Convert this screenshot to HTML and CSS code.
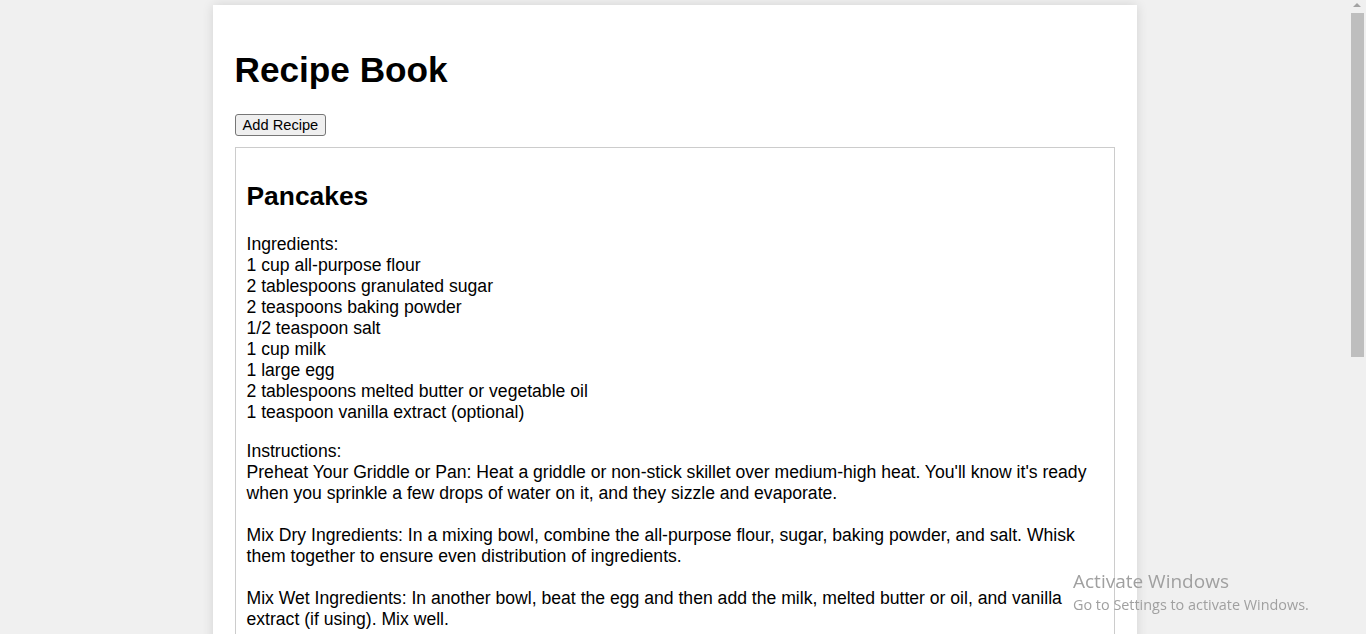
FILE: index.html
```html
<!DOCTYPE html>
<html lang="en">
<head>
<meta charset="utf-8">
<title>Recipe Book</title>
<link rel="stylesheet" href="styles.css">
</head>
<body>
<div class="page">
  <h1 class="title">Recipe Book</h1>
  <button class="add-btn" type="button">Add Recipe</button>
  <div class="recipe-list">
    <div class="recipe">
      <h2 class="recipe-name">Pancakes</h2>
      <p class="recipe-section">Ingredients:<br>1 cup all-purpose flour<br>2 tablespoons granulated sugar<br>2 teaspoons baking powder<br>1/2 teaspoon salt<br>1 cup milk<br>1 large egg<br>2 tablespoons melted butter or vegetable oil<br>1 teaspoon vanilla extract (optional)</p>
      <p class="recipe-section">Instructions:<br>Preheat Your Griddle or Pan: Heat a griddle or non-stick skillet over medium-high heat. You'll know it's ready when you sprinkle a few drops of water on it, and they sizzle and evaporate.<br><br>Mix Dry Ingredients: In a mixing bowl, combine the all-purpose flour, sugar, baking powder, and salt. Whisk them together to ensure even distribution of ingredients.<br><br>Mix Wet Ingredients: In another bowl, beat the egg and then add the milk, melted butter or oil, and vanilla extract (if using). Mix well.<br><br>Combine Wet and Dry Ingredients: Pour the wet ingredients into the dry ingredients. Stir until just combined. It's okay if there are a few lumps; overmixing can make the pancakes tough.<br><br>Cook the Pancakes: Lightly grease the griddle or skillet with butter or oil. Pour about 1/4 cup of batter onto the griddle for each pancake. Cook until bubbles form on the surface and the edges look set, about 2-3 minutes.<br><br>Flip and Cook the Other Side: Carefully flip each pancake with a spatula and cook for another 1-2 minutes, until golden brown.<br><br>Keep Warm: Transfer the cooked pancakes to a plate and cover loosely with foil while you cook the rest of the batter.<br><br>Serve: Serve the pancakes warm with your favorite toppings, such as maple syrup, fresh berries, sliced bananas, or a dusting of powdered sugar. Enjoy!</p>
    </div>
  </div>
</div>
<div class="scrollbar" aria-hidden="true">
  <div class="scroll-arrow"></div>
  <div class="scroll-thumb"></div>
</div>
<div class="activation">
  <div class="activation-title">Activate Windows</div>
  <div class="activation-text">Go to Settings to activate Windows.</div>
</div>
</body>
</html>
```
FILE: styles.css
```css
html {
  background: #f0f0f0;
}

body {
  margin: 0;
  padding-right: 17px;
  background: #f0f0f0;
  color: #000;
  font-family: "Liberation Sans", Arial, sans-serif;
  font-size: 17.6px;
  line-height: 21px;
}

.page {
  width: 880px;
  margin: 5px auto 0;
  padding: 22px;
  background: #fff;
  box-shadow: 0 0 11px rgba(0, 0, 0, 0.12);
}

.title {
  font-size: 35.2px;
  line-height: normal;
  font-weight: bold;
  margin: 22.6px 0 24.6px;
}

.add-btn {
  display: block;
  font-family: "Liberation Sans", Arial, sans-serif;
  font-size: 14.67px;
  line-height: 18px;
  padding: 1px 7px;
  border: 1px solid #767676;
  border-radius: 3px;
  background: #efefef;
  color: #000;
  margin: 0 0 10.5px;
}

.recipe {
  border: 1px solid #ccc;
  padding: 11px 10px 11px 11px;
}

.recipe-name {
  font-size: 26.4px;
  line-height: normal;
  font-weight: bold;
  margin: 21.9px 0 22.3px;
}

.recipe-section {
  margin: 17.6px 0;
}

.recipe-section + .recipe-section {
  margin-top: 18.6px;
}

.scrollbar {
  position: fixed;
  top: 0;
  right: 0;
  width: 17px;
  height: 100vh;
  background: #f0f0f0;
}

.scroll-arrow {
  position: absolute;
  top: 3px;
  left: 4px;
  width: 0;
  height: 0;
  border-left: 4px solid transparent;
  border-right: 4px solid transparent;
  border-bottom: 4px solid #a3a3a3;
}

.scroll-thumb {
  position: absolute;
  top: 13px;
  left: 2px;
  width: 13px;
  height: 344px;
  background: #bebebe;
}

.activation {
  position: fixed;
  left: 1073px;
  top: 568px;
  font-family: "Open Sans", "Noto Sans", sans-serif;
  color: #a0a0a0;
  pointer-events: none;
}

.activation-title {
  font-size: 19px;
  line-height: 26px;
}

.activation-text {
  font-size: 14.4px;
  line-height: 21px;
}
```
